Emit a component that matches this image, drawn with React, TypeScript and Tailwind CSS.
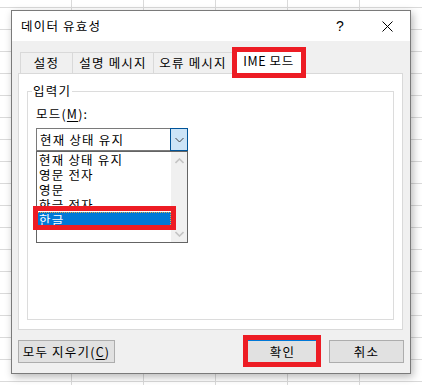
import React from "react";

function Grid() {
  const v = [71.5, 143.5, 215.5, 287.5, 359.5];
  const h: number[] = [];
  for (let y = 7.5; y < 390; y += 22) h.push(y);
  return (
    <svg className="absolute inset-0" width="422" height="385">
      {v.map((x) => (
        <line key={"v" + x} x1={x} y1={0} x2={x} y2={385} stroke="#dadada" strokeWidth={1} />
      ))}
      {h.map((y) => (
        <line key={"h" + y} x1={0} y1={y} x2={422} y2={y} stroke="#dadada" strokeWidth={1} />
      ))}
    </svg>
  );
}

function Chevron({ up, color, width = 1 }: { up?: boolean; color: string; width?: number }) {
  return (
    <svg width="9" height="6" viewBox="0 0 9 6">
      <polyline
        points={up ? "0.5,5 4.5,1 8.5,5" : "0.5,1 4.5,5 8.5,1"}
        fill="none"
        stroke={color}
        strokeWidth={width}
      />
    </svg>
  );
}

export default function App() {
  const items = ["현재 상태 유지", "영문 전자", "영문", "한글 전자", "한글"];
  return (
    <div className="relative w-[422px] h-[385px] overflow-hidden bg-white pt-[10px] pl-[11px] font-['Noto_Sans_CJK_KR',sans-serif] text-[12.5px] tracking-[1.2px] text-black">
      <Grid />
      <div className="relative w-[400px] h-[364px] border border-[#7a7a7a] flex flex-col bg-[#f0f0f0] shadow-[2px_3px_8px_rgba(0,0,0,0.28)]">
        {/* Title bar */}
        <div className="h-[30px] bg-white flex items-center pl-[9px] pr-[17px]">
          <span className="leading-[14px]">데이터 유효성</span>
          <span className="ml-auto font-['Liberation_Sans',sans-serif] text-[14px] leading-[14px]">?</span>
          <svg className="ml-[37px]" width="11" height="11" viewBox="0 0 11 11">
            <line x1="0.5" y1="0.5" x2="10.5" y2="10.5" stroke="#000" strokeWidth="1" />
            <line x1="10.5" y1="0.5" x2="0.5" y2="10.5" stroke="#000" strokeWidth="1" />
          </svg>
        </div>
        {/* Body */}
        <div className="flex-1 flex flex-col pl-[6px] pr-[6px]">
          {/* Tabs */}
          <div className="mt-[7px] h-[25px] flex items-end pl-[2px] relative z-10">
            <div className="w-[52px] h-[21px] border-l border-t border-[#d9d9d9] flex items-center justify-center leading-[14px]">
              설정
            </div>
            <div className="w-[81px] h-[21px] border-l border-t border-[#d9d9d9] flex items-center justify-center leading-[14px]">
              설명 메시지
            </div>
            <div className="w-[80px] h-[21px] border-l border-t border-r border-[#d9d9d9] flex items-center justify-center leading-[14px]">
              오류 메시지
            </div>
            <div className="-ml-px w-[73px] h-[26px] -mb-px bg-white border-l border-t border-r border-[#d9d9d9] flex items-center justify-center leading-[14px] pb-[2px] tracking-[0.6px]">
              IME 모드
            </div>
          </div>
          {/* Panel */}
          <div className="w-[385px] h-[257px] border border-[#d9d9d9] bg-white px-[8px] pt-[10px]">
            <fieldset className="h-[236px] border border-[#dcdcdc] pl-[8px]">
              <legend className="-ml-[4px] px-[1px] leading-[14px]">입력기</legend>
              <div className="mt-[9px] leading-[14px]">
                모드(<span className="underline underline-offset-2">M</span>):
              </div>
              <div className="mt-[7px] w-[152px] h-[23px] flex">
                <div className="flex-1 border-l border-t border-b border-[#7a7a7a] flex items-center pl-[3px] leading-[14px]">
                  현재 상태 유지
                </div>
                <div className="w-[18px] border border-[#005499] bg-[#cce4f7] flex items-center justify-center">
                  <Chevron color="#404040" />
                </div>
              </div>
              <div className="w-[152px] h-[92px] border border-[#646464] flex">
                <div className="flex-1 flex flex-col">
                  {items.map((t, i) => (
                    <div
                      key={t}
                      className={
                        i === 4
                          ? "h-[15px] leading-[15px] pl-[2px] bg-[#0078d7] text-white outline outline-1 outline-dotted outline-[#e0a84a] -outline-offset-1"
                          : "h-[15px] leading-[15px] pl-[2px]"
                      }
                    >
                      {t}
                    </div>
                  ))}
                </div>
                <div className="w-[16px] bg-[#f0f0f0] flex flex-col items-center justify-between pt-[6px] pb-[5px]">
                  <Chevron up color="#c4c4c4" width={1.6} />
                  <Chevron color="#c4c4c4" width={1.6} />
                </div>
              </div>
            </fieldset>
          </div>
          {/* Buttons */}
          <div className="mt-[10px] flex">
            <button className="w-[97px] h-[23px] bg-[#e1e1e1] border border-[#adadad] leading-[14px] flex items-center justify-center">
              모두 지우기(<span className="underline underline-offset-2">C</span>)
            </button>
            <button className="ml-auto w-[75px] h-[23px] bg-[#e1e1e1] border border-[#0078d7] leading-[14px] flex items-center justify-center">
              확인
            </button>
            <button className="ml-[9px] w-[75px] h-[23px] bg-[#e1e1e1] border border-[#adadad] leading-[14px] flex items-center justify-center">
              취소
            </button>
          </div>
        </div>
      </div>
      {/* Red annotation boxes */}
      <div className="absolute left-[232px] top-[47px] w-[74px] h-[31px] border-[5px] border-[#ed1c24] z-20" />
      <div className="absolute left-[33px] top-[206px] w-[143px] h-[24px] border-[5px] border-[#ed1c24] z-20" />
      <div className="absolute left-[243px] top-[335px] w-[78px] h-[32px] border-[5px] border-[#ed1c24] z-20" />
    </div>
  );
}
